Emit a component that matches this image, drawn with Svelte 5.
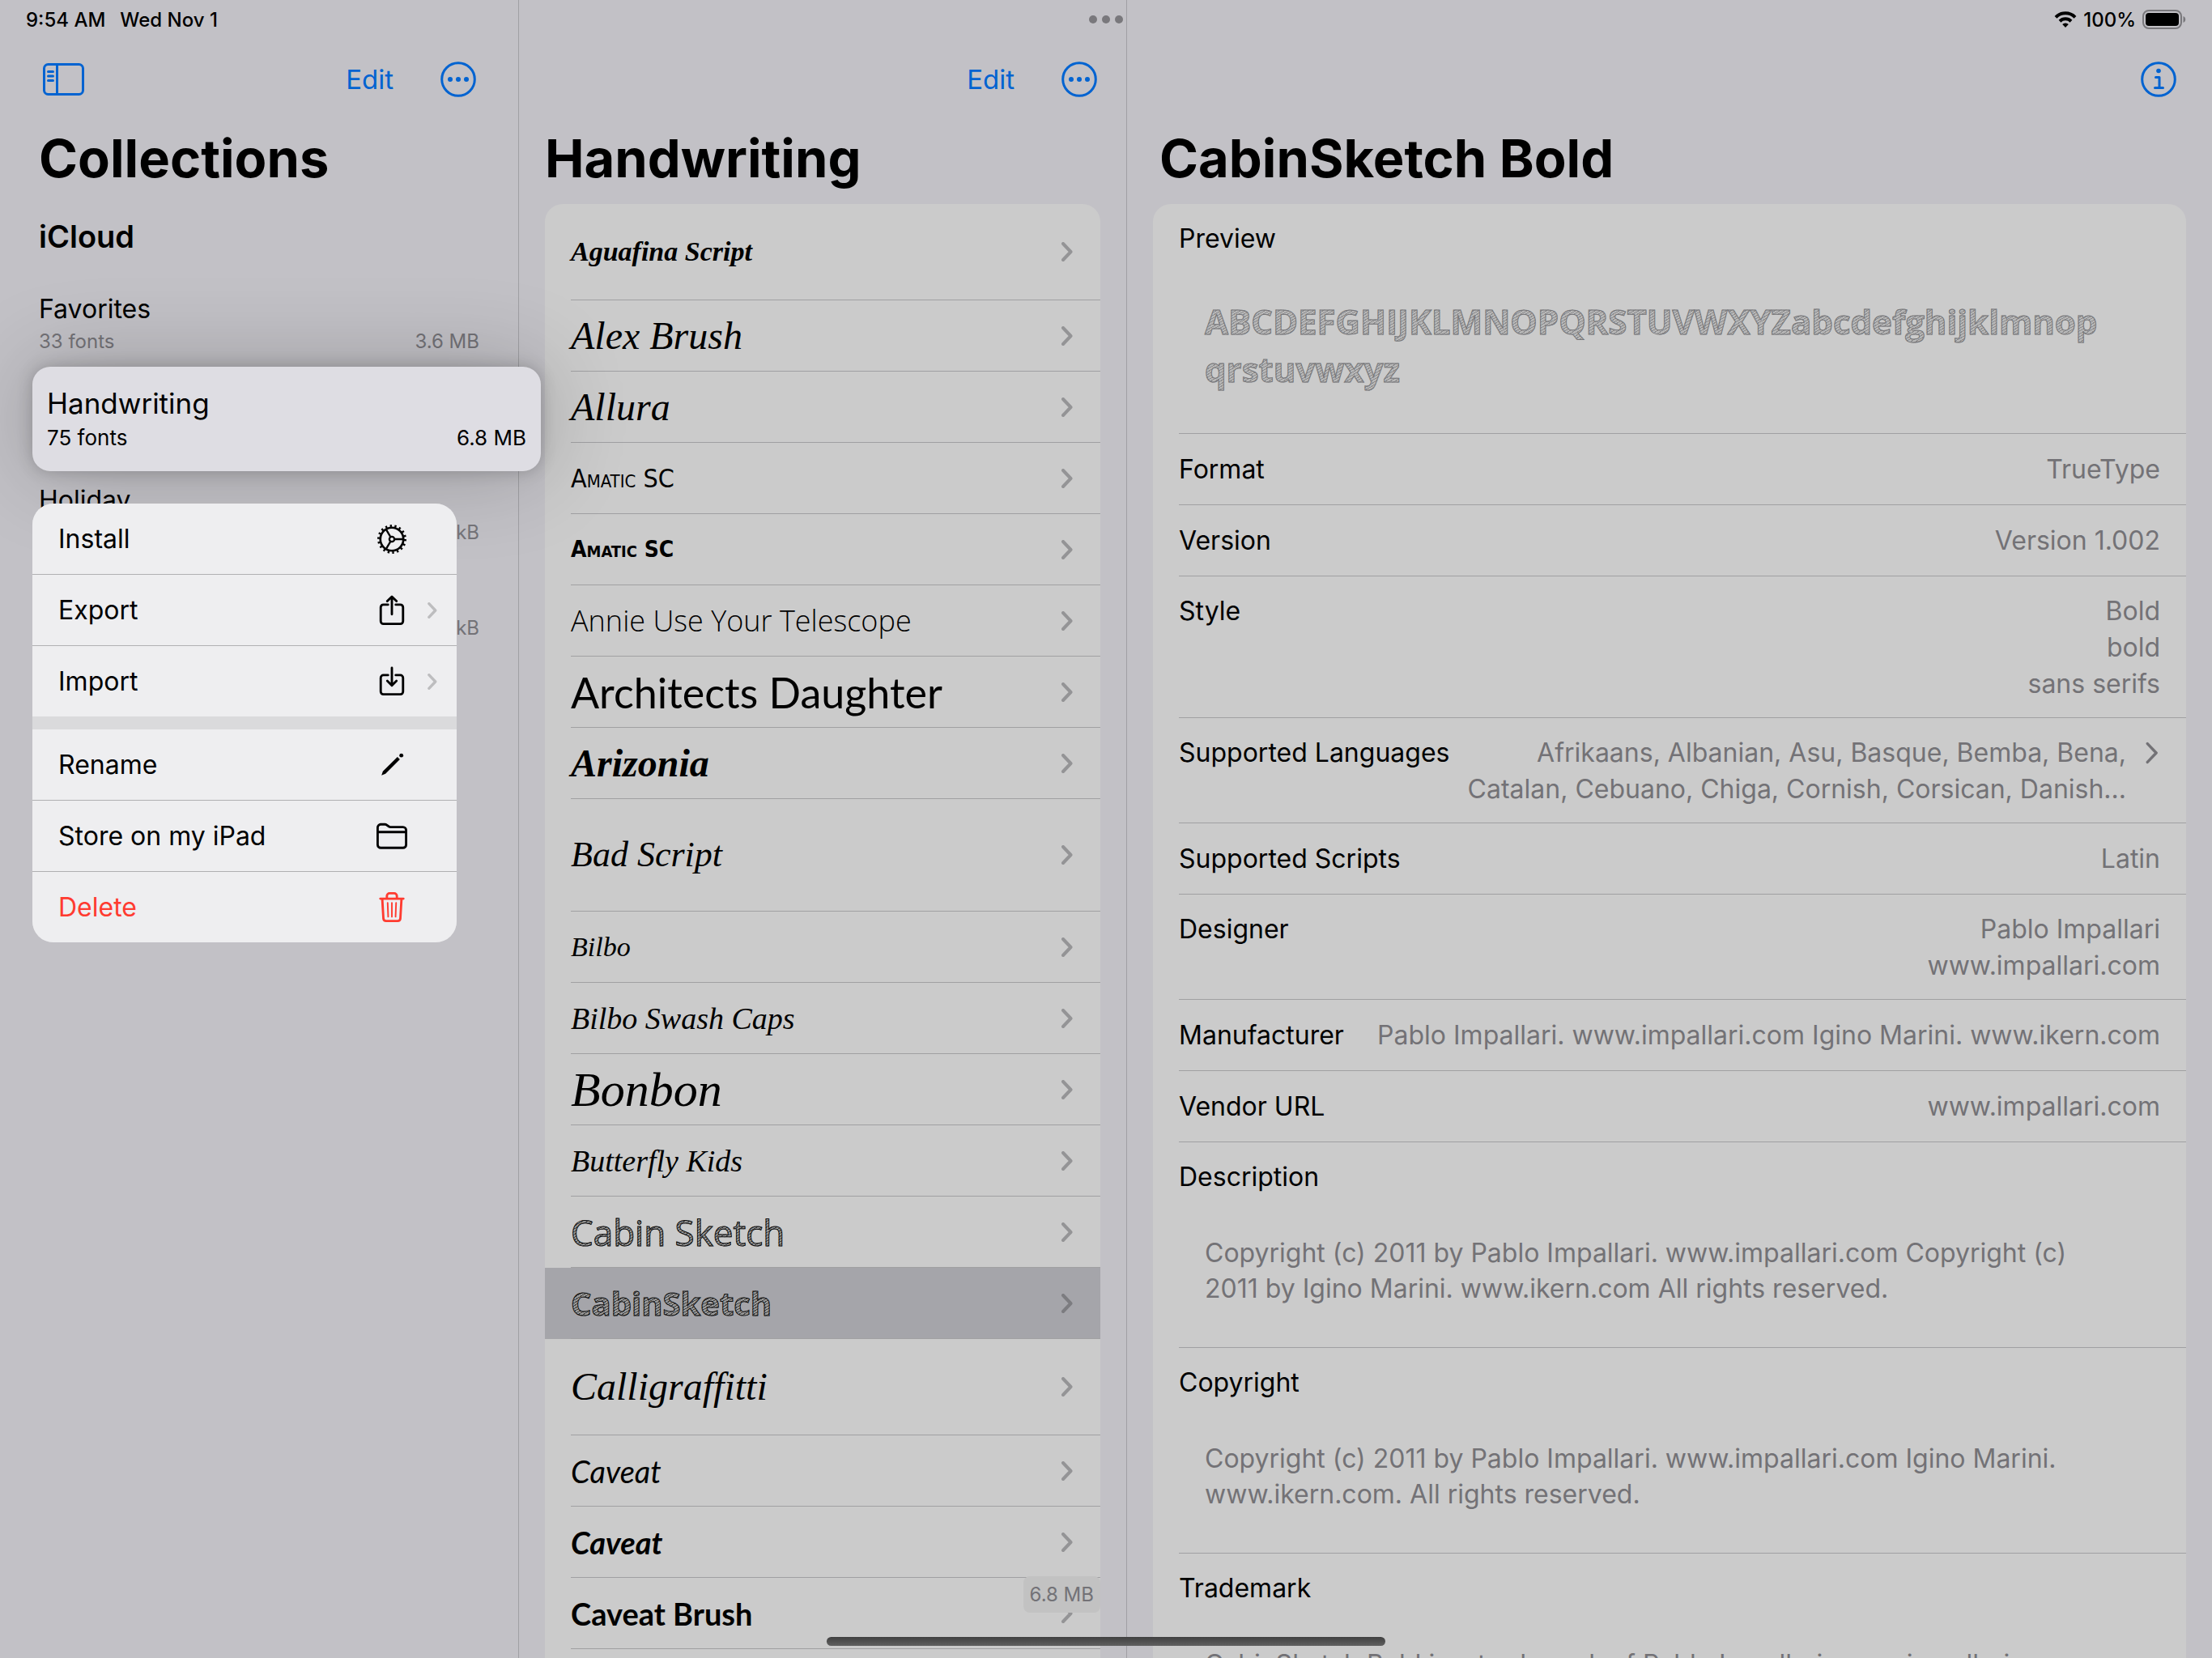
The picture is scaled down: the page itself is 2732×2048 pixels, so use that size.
<script>
  const collections = [
    { name: 'Favorites', count: '33 fonts', size: '3.6 MB' },
    { name: 'Handwriting', count: '75 fonts', size: '6.8 MB', active: true },
    { name: 'Holiday', count: '', size: 'kB' },
    { name: '', count: '', size: 'kB' }
  ];

  const menu = [
    [
      { label: 'Install', icon: 'gear' },
      { label: 'Export', icon: 'export', more: true },
      { label: 'Import', icon: 'import', more: true }
    ],
    [
      { label: 'Rename', icon: 'pencil' },
      { label: 'Store on my iPad', icon: 'folder' },
      { label: 'Delete', icon: 'trash', danger: true }
    ]
  ];

  const fonts = [
    { name: 'Aguafina Script', face: 'script heavy s34', row: 'tall' },
    { name: 'Alex Brush', face: 'script s48' },
    { name: 'Allura', face: 'script s48' },
    { name: 'Amatic SC', face: 'caps thin s32' },
    { name: 'Amatic SC', face: 'caps heavy s28' },
    { name: 'Annie Use Your Telescope', face: 'print s36' },
    { name: 'Architects Daughter', face: 'wide s52' },
    { name: 'Arizonia', face: 'script heavy s48' },
    { name: 'Bad Script', face: 'script s44', row: 'taller' },
    { name: 'Bilbo', face: 'script s34' },
    { name: 'Bilbo Swash Caps', face: 'script s38' },
    { name: 'Bonbon', face: 'script s60' },
    { name: 'Butterfly Kids', face: 'script s38' },
    { name: 'Cabin Sketch', face: 'sketch s44' },
    { name: 'CabinSketch', face: 'sketch heavy s40', selected: true },
    { name: 'Calligraffitti', face: 'script s48', row: 'tall' },
    { name: 'Caveat', face: 'hand s38' },
    { name: 'Caveat', face: 'hand heavy s38' },
    { name: 'Caveat Brush', face: 'hand upright heavy s38' },
    { name: '', face: 'hand s38' }
  ];

  const details = [
    { label: 'Format', lines: ['TrueType'] },
    { label: 'Version', lines: ['Version 1.002'] },
    { label: 'Style', lines: ['Bold', 'bold', 'sans serifs'] },
    {
      label: 'Supported Languages',
      lines: [
        'Afrikaans, Albanian, Asu, Basque, Bemba, Bena,',
        'Catalan, Cebuano, Chiga, Cornish, Corsican, Danish...'
      ],
      more: true
    },
    { label: 'Supported Scripts', lines: ['Latin'] },
    { label: 'Designer', lines: ['Pablo Impallari', 'www.impallari.com'] },
    { label: 'Manufacturer', lines: ['Pablo Impallari. www.impallari.com Igino Marini. www.ikern.com'] },
    { label: 'Vendor URL', lines: ['www.impallari.com'] }
  ];

  const notes = [
    {
      label: 'Description',
      text: 'Copyright (c) 2011 by Pablo Impallari. www.impallari.com Copyright (c) 2011 by Igino Marini. www.ikern.com All rights reserved.'
    },
    {
      label: 'Copyright',
      text: 'Copyright (c) 2011 by Pablo Impallari. www.impallari.com Igino Marini. www.ikern.com. All rights reserved.'
    },
    {
      label: 'Trademark',
      text: 'CabinSketch Bold is a trademark of Pablo Impallari. www.impallari.com'
    }
  ];
</script>

{#snippet chevron()}
  <svg class="chevron" viewBox="0 0 14 24" aria-hidden="true">
    <path d="M2 2 L11.500 12 L2 22" />
  </svg>
{/snippet}

{#snippet ellipsis()}
  <svg class="round" viewBox="0 0 44 44" aria-hidden="true">
    <circle cx="22" cy="22" r="20.300" />
    <g class="solid">
      <circle cx="12" cy="22" r="3" />
      <circle cx="22" cy="22" r="3" />
      <circle cx="32" cy="22" r="3" />
    </g>
  </svg>
{/snippet}

{#snippet menuIcon(name)}
  <svg class="menu-icon" viewBox="0 0 40 40" aria-hidden="true">
    {#if name === 'gear'}
      <circle cx="20" cy="20" r="15" stroke-width="2.800" />
      <circle cx="20" cy="20" r="17.300" stroke-width="3.200" stroke-linecap="butt" stroke-dasharray="2.400 3.639" />
      <circle cx="20" cy="20" r="3.300" stroke-width="2.400" />
      <path stroke-width="2.400" d="M23.500 20H34M18.200 17L12.600 7.500M18.200 23L12.600 32.500" />
    {:else if name === 'export'}
      <path d="M15 12.500H9a3.500 3.500 0 0 0-3.500 3.500v18A3.500 3.500 0 0 0 9 37.500h22a3.500 3.500 0 0 0 3.500-3.500V16a3.500 3.500 0 0 0-3.500-3.500h-6" />
      <path d="M20 25V2.500M14 8l6-6 6 6" />
    {:else if name === 'import'}
      <path d="M15 11.500H9A3.500 3.500 0 0 0 5.500 15v18A3.500 3.500 0 0 0 9 36.500h22a3.500 3.500 0 0 0 3.500-3.500V15a3.500 3.500 0 0 0-3.500-3.500h-6" />
      <path d="M20 2v23M14 19l6 6 6-6" />
    {:else if name === 'pencil'}
      <path class="ink" d="M6.500 33.500l1.800-5.400L27.200 9.400l3.200 3.200L11.700 31.400z" />
      <circle class="ink" cx="32.300" cy="7.500" r="2.600" />
    {:else if name === 'folder'}
      <path d="M1.500 31V8.500A4 4 0 0 1 5.500 4.500H11c3 0 4 3.500 7 3.500h16.500a4 4 0 0 1 4 4v19a4 4 0 0 1-4 4h-29a4 4 0 0 1-4-4z" />
      <path d="M1.500 14.500h37" />
    {:else}
      <path d="M5 8.500h30M13.500 8V5a3.500 3.500 0 0 1 3.500-3.500h6A3.500 3.500 0 0 1 26.500 5v3M7.500 9l1.500 25.500a3.500 3.500 0 0 0 3.500 3h15a3.500 3.500 0 0 0 3.500-3L32.500 9" />
      <path stroke-width="2" d="M14.500 14l.7 18M20 14v18M25.500 14l-.7 18" />
    {/if}
  </svg>
{/snippet}

<div class="screen">
  <header class="status">
    <div class="clock"><span>9:54 AM</span><span>Wed Nov 1</span></div>
    <div class="multitask"><i></i><i></i><i></i></div>
    <div class="power">
      <svg class="wifi" viewBox="0 0 28 20" aria-hidden="true">
        <path d="M2 7.300a17 17 0 0 1 24 0" />
        <path d="M7 12.200a10 10 0 0 1 14 0" />
        <path class="ink" d="M14 20l-3.800-3.900a5.400 5.400 0 0 1 7.600 0z" />
      </svg>
      <span>100%</span>
      <svg class="battery" viewBox="0 0 54 24" aria-hidden="true">
        <rect class="shell" x="1" y="1" width="47" height="22" rx="7" />
        <rect x="4" y="4" width="41" height="16" rx="4" />
        <path class="nub" d="M50.500 8c3.600 1.200 3.600 6.800 0 8z" />
      </svg>
    </div>
  </header>

  <nav class="pane sidebar">
    <div class="toolbar">
      <button class="tool" aria-label="Toggle sidebar">
        <svg class="panel" viewBox="0 0 52 40" aria-hidden="true">
          <rect x="2.500" y="1.500" width="48" height="37" rx="5" />
          <path d="M18.500 2v36M7.500 10.500h6M7.500 16h6M7.500 21.500h6" />
        </svg>
      </button>
      <span class="spacer"></span>
      <button class="tool">Edit</button>
      <button class="tool" aria-label="More">{@render ellipsis()}</button>
    </div>
    <h1>Collections</h1>
    <h2>iCloud</h2>
    <ul class="collections">
      {#each collections as item}
        <li>
          {#if item.active}
            <a href="#collection" class="lifted">
              <span class="name">{item.name}</span>
              <span class="meta"><span>{item.count}</span><span>{item.size}</span></span>
            </a>
            <div class="menu">
              {#each menu as group}
                <div class="group">
                  {#each group as action}
                    <button class:danger={action.danger}>
                      <span class="label">{action.label}</span>
                      {@render menuIcon(action.icon)}
                      <span class="more">{#if action.more}{@render chevron()}{/if}</span>
                    </button>
                  {/each}
                </div>
              {/each}
            </div>
          {:else}
            <a href="#collection" class="collection">
              <span class="name">{item.name}</span>
              <span class="meta"><span>{item.count}</span><span>{item.size}</span></span>
            </a>
          {/if}
        </li>
      {/each}
    </ul>
  </nav>

  <section class="pane list">
    <div class="toolbar">
      <span class="spacer"></span>
      <button class="tool">Edit</button>
      <button class="tool" aria-label="More">{@render ellipsis()}</button>
    </div>
    <h1>Handwriting</h1>
    <ul class="card fonts">
      {#each fonts as font}
        <li class={font.row} class:selected={font.selected}>
          <a href="#font">
            <span class="face {font.face}">{font.name}</span>
            {@render chevron()}
          </a>
        </li>
      {/each}
    </ul>
    <div class="total">6.8 MB</div>
  </section>

  <main class="pane detail">
    <div class="toolbar">
      <span class="spacer"></span>
      <button class="tool" aria-label="Info">
        <svg class="round" viewBox="0 0 44 44" aria-hidden="true">
          <circle cx="22" cy="22" r="20.300" />
          <circle class="solid" cx="22" cy="11.500" r="2.800" />
          <path d="M18.500 19.500h4.500v13M17.500 32.500h10" />
        </svg>
      </button>
    </div>
    <h1>CabinSketch Bold</h1>
    <dl class="card">
      <div class="note">
        <dt>Preview</dt>
        <dd class="preview sketch heavy">ABCDEFGHIJKLMNOPQRSTUVWXYZabcdefghijklmnopqrstuvwxyz</dd>
      </div>
      {#each details as row}
        <div class="row" class:single={row.lines.length === 1}>
          <dt>{row.label}</dt>
          <dd>
            {#each row.lines as line}
              <span>{line}</span>
            {/each}
          </dd>
          {#if row.more}{@render chevron()}{/if}
        </div>
      {/each}
      {#each notes as note}
        <div class="note">
          <dt>{note.label}</dt>
          <dd>{note.text}</dd>
        </div>
      {/each}
    </dl>
  </main>

  <div class="home"></div>
</div>

<style>
  :global(body) {
    background: #c2c1c6;
  }

  .screen {
    position: relative;
    display: grid;
    grid-template-columns: 641px 751px 1fr;
    grid-template-rows: 100%;
    height: 100vh;
    overflow: hidden;
    background: #c2c1c6;
    color: #000;
    font-family: Inter, "Liberation Sans", sans-serif;
    font-size: 32px;
    line-height: 45px;
  }

  h1, h2, ul, dl, dd {
    margin: 0;
    padding: 0;
  }

  ul {
    list-style: none;
  }

  a {
    color: inherit;
    text-decoration: none;
  }

  button {
    border: none;
    background: none;
    padding: 0;
    font: inherit;
    color: inherit;
    cursor: pointer;
  }

  svg {
    flex: none;
    fill: none;
    stroke: currentColor;
    stroke-width: 3;
    stroke-linecap: round;
    stroke-linejoin: round;
  }

  .ink,
  .solid {
    fill: currentColor;
    stroke: none;
  }

  /* status bar */
  .status {
    position: absolute;
    inset: 0 0 auto 0;
    display: grid;
    grid-template-columns: 1fr auto 1fr;
    align-items: center;
    height: 48px;
    padding: 0 32px;
    font-size: 24px;
    font-weight: 500;
  }

  .clock {
    display: flex;
    gap: 18px;
  }

  .multitask {
    display: flex;
    gap: 6px;
  }

  .multitask i {
    width: 10px;
    height: 10px;
    border-radius: 50%;
    background: #79787c;
  }

  .power {
    display: flex;
    justify-content: flex-end;
    align-items: center;
    gap: 8px;
  }

  .wifi {
    width: 28px;
    height: 20px;
    stroke-width: 4;
    stroke-linecap: butt;
  }

  .battery {
    width: 54px;
    height: 24px;
    fill: #000;
    stroke: none;
  }

  .shell {
    fill: none;
    stroke: #79787c;
    stroke-width: 2;
  }

  .nub {
    fill: #79787c;
  }

  /* panes */
  .pane {
    min-width: 0;
    padding-top: 48px;
  }

  .sidebar,
  .list {
    border-right: 1px solid #a0a0a4;
  }

  .sidebar {
    position: relative;
    z-index: 1;
    padding-left: 48px;
    padding-right: 48px;
  }

  .list {
    position: relative;
    padding-left: 32px;
    padding-right: 32px;
  }

  .detail {
    padding-left: 32px;
    padding-right: 32px;
  }

  .toolbar {
    display: flex;
    align-items: center;
    gap: 58px;
    height: 100px;
    padding: 0 4px;
    color: #0063d1;
    font-size: 33px;
  }

  .detail .toolbar {
    padding-right: 12px;
  }

  .spacer {
    flex: 1;
  }

  .tool {
    display: flex;
  }

  .round {
    width: 44px;
    height: 44px;
  }

  .panel {
    width: 52px;
    height: 40px;
  }

  h1 {
    margin-bottom: 8px;
    font-size: 65px;
    font-weight: 700;
    line-height: 96px;
    white-space: nowrap;
  }

  .detail h1 {
    padding-left: 8px;
  }

  h2 {
    margin-bottom: 8px;
    font-size: 38px;
    font-weight: 600;
    line-height: 80px;
  }

  .collections li {
    position: relative;
    height: 118px;
  }

  .name,
  .meta {
    display: flex;
    justify-content: space-between;
  }

  .name {
    height: 44px;
    line-height: 44px;
  }

  .meta {
    font-size: 24px;
    line-height: 36px;
  }

  .collection {
    display: block;
    padding: 20px 0;
  }

  .collection .meta {
    color: #737277;
  }

  .lifted {
    position: absolute;
    inset: -5px -76px -6px -8px;
    display: flex;
    flex-direction: column;
    justify-content: center;
    padding: 2px 18px 0;
    border-radius: 22px;
    background: #dedde3;
    box-shadow: 0 0 20px rgba(0, 0, 0, 0.2), 0 0 110px rgba(0, 0, 0, 0.22);
    font-size: 35px;
  }

  .lifted .meta {
    font-size: 26px;
    line-height: 42px;
  }

  .menu {
    position: absolute;
    z-index: 2;
    top: 164px;
    left: -8px;
    width: 524px;
    border-radius: 26px;
    background: #dadadc;
    overflow: hidden;
  }

  .group + .group {
    margin-top: 16px;
  }

  .menu button {
    display: flex;
    align-items: center;
    width: 100%;
    height: 88px;
    padding-left: 32px;
    border-bottom: 1px solid #b0b0b2;
    background: #eeeef0;
    text-align: left;
  }

  .menu button:last-child {
    height: 87px;
    border-bottom: none;
  }

  .menu .danger {
    color: #ff3b30;
  }

  .label {
    flex: 1;
  }

  .menu-icon {
    width: 38px;
    height: 38px;
  }

  .more {
    display: flex;
    width: 61px;
    justify-content: center;
    color: #bdbdbf;
  }

  .chevron {
    width: 14px;
    height: 24px;
    stroke-width: 4;
    color: #949496;
  }

  .more .chevron {
    height: 20px;
    color: inherit;
  }

  .card {
    border-radius: 22px 22px 0 0;
    background: #cbcbcb;
  }

  /* font list */
  .fonts a {
    display: flex;
    align-items: center;
    justify-content: space-between;
    height: 88px;
    padding-right: 34px;
    margin-left: 32px;
    box-sizing: border-box;
    border-bottom: 1px solid #a0a0a2;
    white-space: nowrap;
  }

  .fonts .tall a {
    height: 119px;
  }

  .fonts .taller a {
    height: 139px;
  }

  .fonts .selected {
    background: #a5a5aa;
  }

  .selected .chevron {
    color: #7c7c80;
  }

  .face {
    line-height: 60px;
  }

  .script {
    font-family: "Liberation Serif", serif;
    font-style: italic;
  }

  .caps {
    font-family: "DejaVu Sans Condensed", "DejaVu Sans", sans-serif;
    font-variant: small-caps;
  }

  .thin {
    font-weight: 200;
  }

  .print {
    font-family: "Open Sans", sans-serif;
    font-weight: 300;
  }

  .wide {
    font-family: Lato, sans-serif;
  }

  .hand {
    font-family: Lato, sans-serif;
    font-style: italic;
  }

  .upright {
    font-style: normal;
  }

  .heavy {
    font-weight: 700;
  }

  .sketch {
    font-family: "Open Sans", sans-serif;
    background: repeating-linear-gradient(150deg, #444 0 1px, #999 1px 3px);
    background-clip: text;
    -webkit-text-stroke: 1px #111;
    color: transparent;
  }

  .s28 { font-size: 28px; }
  .s32 { font-size: 32px; }
  .s34 { font-size: 34px; }
  .s36 { font-size: 36px; }
  .s38 { font-size: 38px; }
  .s40 { font-size: 40px; }
  .s44 { font-size: 44px; }
  .s48 { font-size: 48px; }
  .s52 { font-size: 52px; }
  .s60 { font-size: 60px; }

  .total {
    position: absolute;
    right: 32px;
    bottom: 56px;
    padding: 0 8px;
    border-radius: 8px;
    background: #c2c2c2;
    color: #737277;
    font-size: 24px;
  }

  /* details */
  .row,
  .note {
    margin-left: 32px;
    padding-right: 32px;
    border-bottom: 1px solid #a0a0a2;
  }

  .row {
    display: flex;
    justify-content: space-between;
    padding-top: 20px;
    padding-bottom: 19px;
  }

  .single {
    padding-top: 21px;
    padding-bottom: 21px;
  }

  dt {
    white-space: nowrap;
  }

  .row dd {
    display: flex;
    flex: 1;
    flex-direction: column;
    text-align: right;
    white-space: nowrap;
  }

  dd {
    color: #737276;
  }

  .row .chevron {
    width: 16px;
    height: 30px;
    margin: 8px 2px 0 24px;
    stroke-width: 3;
    color: #737276;
  }

  .note {
    padding-top: 20px;
    padding-bottom: 50px;
  }

  .note dd {
    margin: 50px 64px 0 32px;
    line-height: 44px;
  }

  .note .preview {
    font-size: 42px;
    line-height: 59px;
    word-break: break-all;
    background: repeating-linear-gradient(150deg, #8c8c8e 0 1px, #b8b8b8 1px 3px);
    background-clip: text;
    -webkit-text-stroke: 1px #77777a;
    color: transparent;
  }

  .home {
    position: absolute;
    z-index: 3;
    left: 50%;
    bottom: 15px;
    width: 690px;
    height: 11px;
    margin-left: -345px;
    border-radius: 6px;
    background: linear-gradient(#404040, #606060);
  }
</style>
